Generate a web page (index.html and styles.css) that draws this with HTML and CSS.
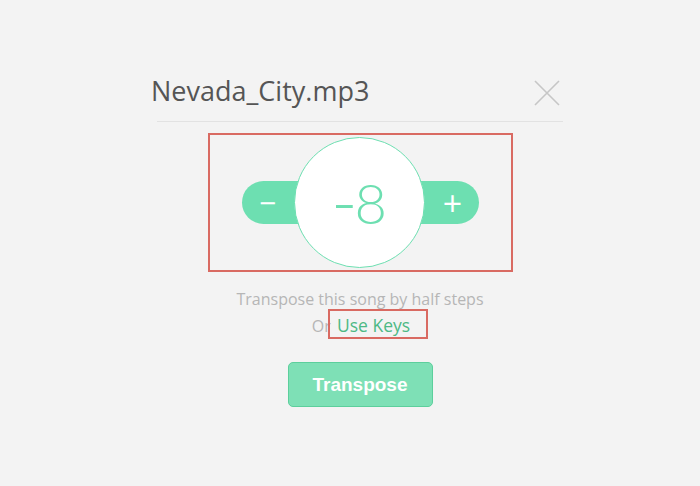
FILE: index.html
```html
<!DOCTYPE html>
<html lang="en">
<head>
    <meta charset="UTF-8">
    <meta name="viewport" content="width=device-width, initial-scale=1.0">
    <title>Transpose</title>
    <link rel="stylesheet" href="styles.css">
</head>
<body>
    <div class="modal">
        <div class="modal-header">
            <h2 class="file-name">Nevada_City.mp3</h2>
            <button class="close-btn" aria-label="Close">
                <svg width="26" height="26" viewBox="0 0 26 26">
                    <path d="M1 1 L25 25 M25 1 L1 25" stroke="#c6c6c6" stroke-width="1.6" fill="none"/>
                </svg>
            </button>
        </div>
        <div class="stepper-box">
            <div class="stepper">
                <button class="step-btn minus">&minus;</button>
                <div class="step-value"><span class="sign">-</span>8</div>
                <button class="step-btn plus">+</button>
            </div>
        </div>
        <p class="hint">Transpose this song by half steps</p>
        <p class="hint alt">Or <span class="use-keys">Use Keys</span></p>
        <button class="transpose-btn">Transpose</button>
    </div>
</body>
</html>
```

FILE: styles.css
```css
body {
    margin: 0;
    background: #f3f3f3;
    font-family: "Open Sans", Arial, sans-serif;
}
.modal {
    width: 420px;
    margin-left: 150px;
    padding-top: 71px;
    display: flex;
    flex-direction: column;
    align-items: center;
}
.modal-header {
    width: 406px;
    display: flex;
    justify-content: space-between;
    align-items: center;
    border-bottom: 1px solid #e2e2e2;
    padding-bottom: 10px;
}
.file-name {
    margin: 0 0 0 -6px;
    font-size: 27px;
    font-weight: 400;
    color: #555;
    line-height: 40px;
}
.close-btn {
    background: none;
    border: none;
    padding: 0;
    margin-right: 3px;
    margin-top: 3px;
    display: flex;
}
.stepper-box {
    margin-top: 11px;
    width: 301px;
    height: 135px;
    border: 2px solid #d96a62;
    display: flex;
    align-items: center;
    justify-content: center;
}
.stepper {
    display: flex;
    align-items: center;
    height: 43px;
    background: #6ddfb1;
    border-radius: 22px;
}
.step-btn {
    background: none;
    border: none;
    color: #fff;
    font-size: 30px;
    font-family: "Open Sans", Arial, sans-serif;
    width: 52px;
    padding: 0;
    cursor: pointer;
}
.step-btn.plus {
    width: 54px;
    font-size: 34px;
    text-indent: 2px;
}
.step-value {
    width: 129px;
    height: 129px;
    margin: -45px 0;
    border-radius: 50%;
    background: #fff;
    border: 1.5px solid #6ddfb1;
    display: flex;
    align-items: center;
    justify-content: center;
    font-family: Lato, "Open Sans", sans-serif;
    font-weight: 300;
    font-size: 56px;
    color: #6ddfb1;
}
.sign {
    font-size: 72px;
    margin-right: -3px;
    margin-bottom: 5px;
}
.hint {
    margin: 16px 0 0;
    font-size: 16px;
    color: #b6b6b6;
    line-height: 22px;
}
.hint.alt {
    margin-top: -1px;
    padding-left: 20px;
}
.use-keys {
    color: #4db985;
    font-size: 17.5px;
    display: inline-block;
    border: 2px solid #d96a62;
    padding: 3px 16px 1px 7px;
    margin-left: -7px;
    line-height: 22px;
}
.transpose-btn {
    margin-top: 23px;
    width: 145px;
    height: 45px;
    background: #7ee0b6;
    border: 1px solid #5ccf9c;
    border-radius: 5px;
    color: #fff;
    font-size: 19px;
    font-weight: 700;
    font-family: "Liberation Sans", Arial, sans-serif;
}
```
